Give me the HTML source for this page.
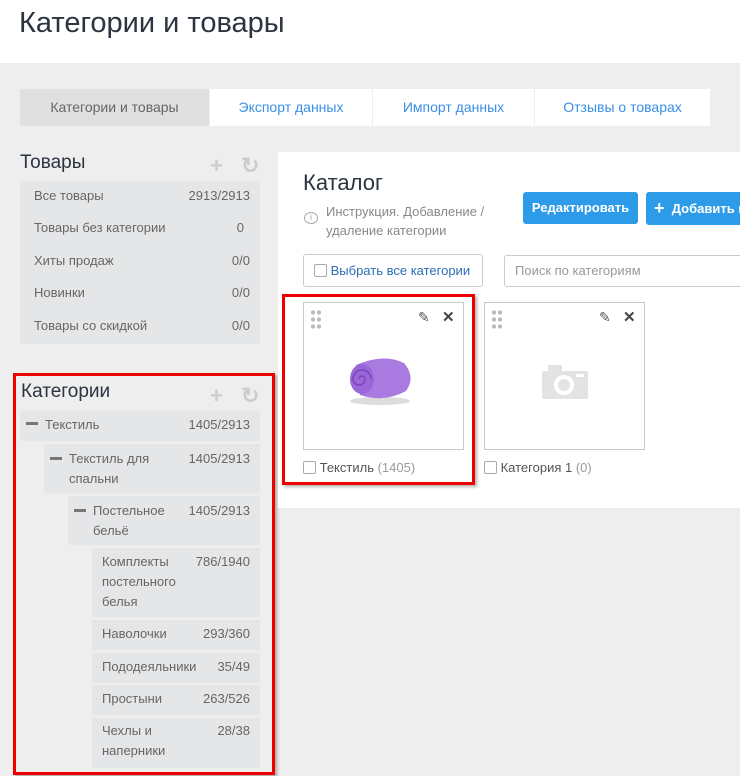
<!DOCTYPE html>
<html><head><meta charset="utf-8"><style>
*{box-sizing:border-box;margin:0;padding:0}
body{width:740px;height:776px;overflow:hidden;background:#eeeeee;font-family:"Liberation Sans",sans-serif;position:relative;color:#555}
.a{position:absolute}
.hdr{left:0;top:0;width:740px;height:63px;background:#fff}
.hdr h1{position:absolute;left:19px;top:7px;font-size:29px;font-weight:normal;color:#2b3440}
.tab{top:89px;height:37px;background:#fff;color:#3a8fe6;font-size:14px;text-align:center;line-height:37px}
.row{background:#e5e6e8;font-size:13px;color:#666;padding:0 10px 0 14px;display:flex;justify-content:space-between;align-items:flex-start;border-radius:2px}
.ttl{font-size:19px;color:#2b3440}
.ic{color:#ccc;font-size:22px;font-weight:bold}
.btn{background:#2d9be8;color:#fff;font-size:13px;font-weight:bold;border-radius:3px;line-height:32px}
.card{width:161px;height:148px;border:1px solid #c8c8c8;background:#fff}
.cb{display:inline-block;width:13px;height:13px;border:1px solid #aaa;border-radius:2px;vertical-align:-2px;background:#fff}
.dots{left:6px;top:6px;width:12px;height:21px;background-image:radial-gradient(circle,#bbb 2px,transparent 2.3px);background-size:6px 7px}
.dash{display:inline-block;width:12px;height:3px;background:#777;margin:0 7px 0 0;vertical-align:4px;flex:none}
</style></head><body>
<div class="a hdr"><h1>Категории и товары</h1></div>
<div class="a tab" style="left:20px;width:189px;background:#e0e0e0;color:#666">Категории и товары</div>
<div class="a tab" style="left:210px;width:162px">Экспорт данных</div>
<div class="a tab" style="left:373px;width:161px">Импорт данных</div>
<div class="a tab" style="left:535px;width:175px">Отзывы о товарах</div>

<div class="a ttl" style="left:20px;top:152px">Товары</div>
<div class="a ic" style="left:210px;top:153px">+</div><div class="a ic" style="left:241px;top:153px">↻</div>
<div class="a row" style="left:20px;top:181px;width:240px;height:32px;line-height:30px"><span>Все товары</span><span>2913/2913</span></div>
<div class="a row" style="left:20px;top:213px;width:240px;height:33px;line-height:30px"><span>Товары без категории</span><span style="margin-right:6px">0</span></div>
<div class="a row" style="left:20px;top:246px;width:240px;height:32px;line-height:30px"><span>Хиты продаж</span><span>0/0</span></div>
<div class="a row" style="left:20px;top:278px;width:240px;height:33px;line-height:30px"><span>Новинки</span><span>0/0</span></div>
<div class="a row" style="left:20px;top:311px;width:240px;height:33px;line-height:30px"><span>Товары со скидкой</span><span>0/0</span></div>

<div class="a" style="left:13px;top:373px;width:262px;height:402px;border:3px solid #e00;box-shadow:2px 2px 3px rgba(0,0,0,.3)"></div>
<div class="a ttl" style="left:21px;top:381px">Категории</div>
<div class="a ic" style="left:210px;top:383px">+</div><div class="a ic" style="left:241px;top:383px">↻</div>
<div class="a row" style="left:20px;top:411px;width:240px;height:30px;line-height:28px;padding-left:6px"><span><span class="dash"></span>Текстиль</span><span>1405/2913</span></div>
<div class="a row" style="left:44px;top:444px;width:216px;height:49px;line-height:20px;padding-top:5px;padding-left:6px"><span style="display:flex"><span class="dash" style="margin-top:8px;vertical-align:0"></span><span>Текстиль для<br>спальни</span></span><span>1405/2913</span></div>
<div class="a row" style="left:68px;top:496px;width:192px;height:49px;line-height:20px;padding-top:5px;padding-left:6px"><span style="display:flex"><span class="dash" style="margin-top:8px;vertical-align:0"></span><span>Постельное<br>бельё</span></span><span>1405/2913</span></div>
<div class="a row" style="left:92px;top:548px;width:168px;height:69px;line-height:20px;padding-top:4px;padding-left:10px"><span>Комплекты<br>постельного<br>белья</span><span>786/1940</span></div>
<div class="a row" style="left:92px;top:620px;width:168px;height:30px;line-height:28px;padding-left:10px"><span>Наволочки</span><span>293/360</span></div>
<div class="a row" style="left:92px;top:653px;width:168px;height:30px;line-height:28px;padding-left:10px"><span>Пододеяльники</span><span>35/49</span></div>
<div class="a row" style="left:92px;top:685px;width:168px;height:30px;line-height:28px;padding-left:10px"><span>Простыни</span><span>263/526</span></div>
<div class="a row" style="left:92px;top:718px;width:168px;height:50px;line-height:20px;padding-top:3px;padding-left:10px"><span>Чехлы и<br>наперники</span><span>28/38</span></div>

<div class="a" style="left:278px;top:152px;width:462px;height:356px;background:#fff"></div>
<div class="a" style="left:303px;top:170px;font-size:22px;color:#2b3440">Каталог</div>
<div class="a" style="left:304px;top:212px;width:14px;height:12px;border:1px solid #aaa;border-radius:50%;font-size:8px;text-align:center;line-height:10px;color:#999">i</div>
<div class="a" style="left:326px;top:202px;font-size:13px;color:#888;line-height:19px">Инструкция. Добавление /<br>удаление категории</div>
<div class="a btn" style="left:523px;top:192px;width:115px;text-align:center">Редактировать</div>
<div class="a btn" style="left:646px;top:192px;width:100px;padding-left:8px;white-space:nowrap"><span style="font-size:18px;vertical-align:-1px">+</span>&nbsp; Добавить к</div>
<div class="a" style="left:303px;top:254px;width:180px;height:33px;border:1px solid #ccc;border-radius:3px;font-size:13px;color:#2a6fb5;line-height:31px;padding-left:10px"><span class="cb"></span> Выбрать все категории</div>
<div class="a" style="left:504px;top:255px;width:240px;height:32px;border:1px solid #ccc;border-radius:3px;font-size:13px;color:#999;line-height:30px;padding-left:10px">Поиск по категориям</div>

<div class="a" style="left:282px;top:294px;width:193px;height:191px;border:3px solid #e00;box-shadow:2px 2px 3px rgba(0,0,0,.3)"></div>
<div class="a card" style="left:303px;top:302px"><div class="a dots"></div>
<div class="a" style="left:114px;top:6px;font-size:14px;color:#555">✎</div><div class="a" style="left:138px;top:5px;font-size:15px;font-weight:bold;color:#444">✕</div>
<svg class="a" style="left:40px;top:48px" width="72" height="56"><ellipse cx="36" cy="50" rx="30" ry="4" fill="#ddd"/><path d="M12 14 Q40 2 60 12 Q72 26 62 40 Q40 52 16 44 Z" fill="#a97be0"/><ellipse cx="18" cy="28" rx="12" ry="15" fill="#9b66d8"/><path d="M18 28 m-3 0 a3 3 0 1 1 6 0 a6 6 0 1 1 -12 0 a9 9 0 1 1 18 0" stroke="#7a45b8" fill="none" stroke-width="1.5"/></svg>
</div>
<div class="a" style="left:303px;top:460px;font-size:13px;color:#555"><span class="cb"></span> Текстиль <span style="color:#999">(1405)</span></div>
<div class="a card" style="left:484px;top:302px"><div class="a dots"></div>
<div class="a" style="left:114px;top:6px;font-size:14px;color:#555">✎</div><div class="a" style="left:138px;top:5px;font-size:15px;font-weight:bold;color:#444">✕</div>
<svg class="a" style="left:57px;top:60px" width="46" height="36"><rect x="0" y="8" width="46" height="28" rx="2" fill="#e3e3e3"/><rect x="6" y="2" width="14" height="8" fill="#e3e3e3"/><circle cx="22" cy="22" r="10" fill="#fff"/><circle cx="22" cy="22" r="6" fill="#e3e3e3"/><rect x="34" y="11" width="8" height="3" fill="#fff"/></svg>
</div>
<div class="a" style="left:484px;top:460px;font-size:13px;color:#555"><span class="cb"></span> Категория 1 <span style="color:#999">(0)</span></div>
</body></html>
